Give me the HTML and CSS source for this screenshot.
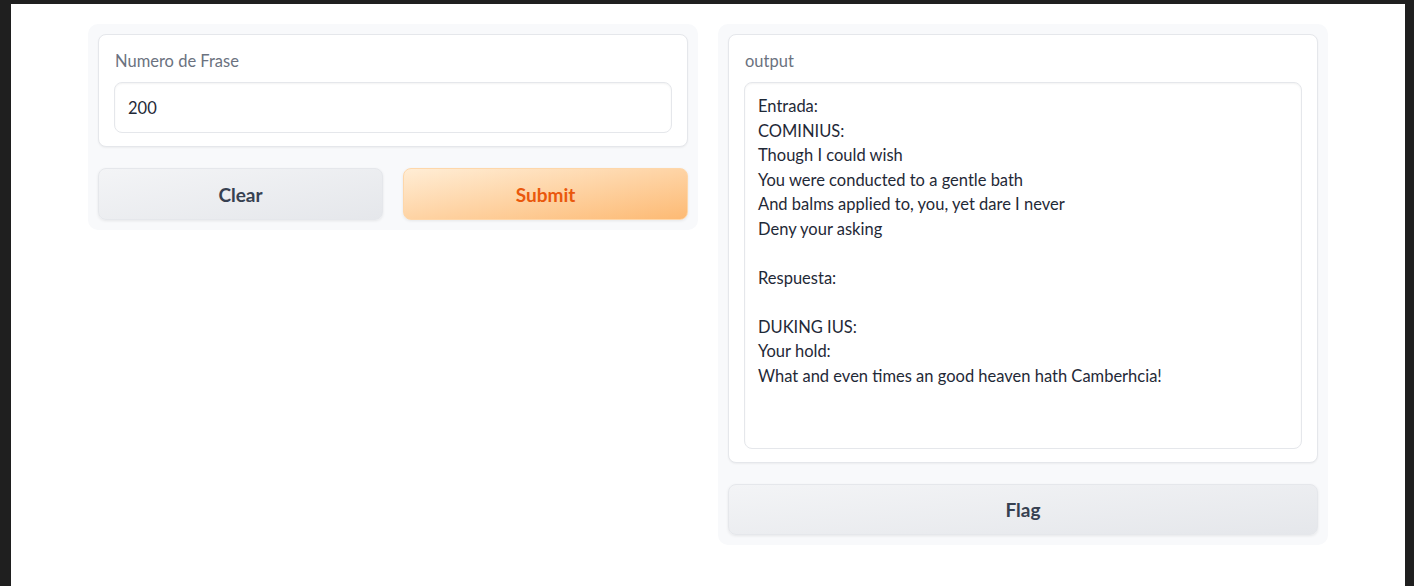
FILE: index.html
```html
<!DOCTYPE html>
<html lang="es">
<head>
<meta charset="utf-8">
<title>Gradio</title>
<link rel="stylesheet" href="styles.css">
</head>
<body>
<div class="page">
  <div class="container">
    <div class="panel">
      <div class="card">
        <label class="label" for="num">Numero de Frase</label>
        <input class="input" id="num" type="text" value="200">
      </div>
      <div class="btn-row">
        <button class="btn btn-secondary">Clear</button>
        <button class="btn btn-primary">Submit</button>
      </div>
    </div>
    <div class="panel">
      <div class="card">
        <div class="label">output</div>
        <div class="output">Entrada:
COMINIUS:
Though I could wish
You were conducted to a gentle bath
And balms applied to, you, yet dare I never
Deny your asking

Respuesta:

DUKING IUS:
Your hold:
What and even times an good heaven hath Camberhcia!</div>
      </div>
      <button class="btn btn-secondary btn-full">Flag</button>
    </div>
  </div>
</div>
</body>
</html>
```

FILE: styles.css
```css
* { box-sizing: border-box; }
html, body { margin: 0; padding: 0; }
body {
  background: #1f1f1f;
  font-family: "Lato", "Open Sans", sans-serif;
}
.page {
  margin: 4px 9px 0 11px;
  background: #ffffff;
  min-height: 582px;
}
.container {
  width: 1240px;
  margin: 0 auto;
  padding-top: 20px;
  display: flex;
  gap: 20px;
  align-items: flex-start;
}
.panel {
  flex: 1;
  background: #f8f9fb;
  border-radius: 10px;
  padding: 10px;
  display: flex;
  flex-direction: column;
  gap: 21px;
}
.card {
  background: #ffffff;
  border: 1px solid #e5e7eb;
  border-radius: 8px;
  box-shadow: 0 1px 2px rgba(0,0,0,0.05);
  padding: 16px 15px 13px;
  display: flex;
  flex-direction: column;
}
.label {
  color: #6b7280;
  font-size: 16.5px;
  line-height: 20px;
  height: 20px;
  margin-bottom: 11px;
  padding-left: 1px;
}
.input {
  height: 51px;
  border: 1px solid #e5e7eb;
  border-radius: 8px;
  box-shadow: inset 0 1px 2px rgba(0,0,0,0.05);
  padding: 0 13px;
  font-family: inherit;
  font-size: 16.5px;
  color: #1f2937;
  background: #ffffff;
  outline: none;
}
.output {
  height: 367px;
  border: 1px solid #e5e7eb;
  border-radius: 8px;
  box-shadow: inset 0 1px 2px rgba(0,0,0,0.05);
  padding: 11px 13px;
  font-size: 16.5px;
  line-height: 24.55px;
  color: #1f2937;
  white-space: pre-wrap;
}
.btn-row {
  display: flex;
  gap: 20px;
}
.btn {
  flex: 1;
  height: 52px;
  border-radius: 8px;
  font-family: inherit;
  font-size: 19px;
  font-weight: 700;
  cursor: pointer;
  box-shadow: 0 1px 3px rgba(0,0,0,0.08);
}
.btn-secondary {
  border: 1px solid #e5e7eb;
  background: linear-gradient(to bottom right, #f3f4f6, #e5e7eb);
  color: #374151;
}
.btn-primary {
  border: 1px solid #fed7aa;
  background: linear-gradient(to bottom right, #ffedd5, #fdba74);
  color: #ea580c;
}
.btn-full {
  flex: none;
  width: 100%;
  height: 51px;
}
```
